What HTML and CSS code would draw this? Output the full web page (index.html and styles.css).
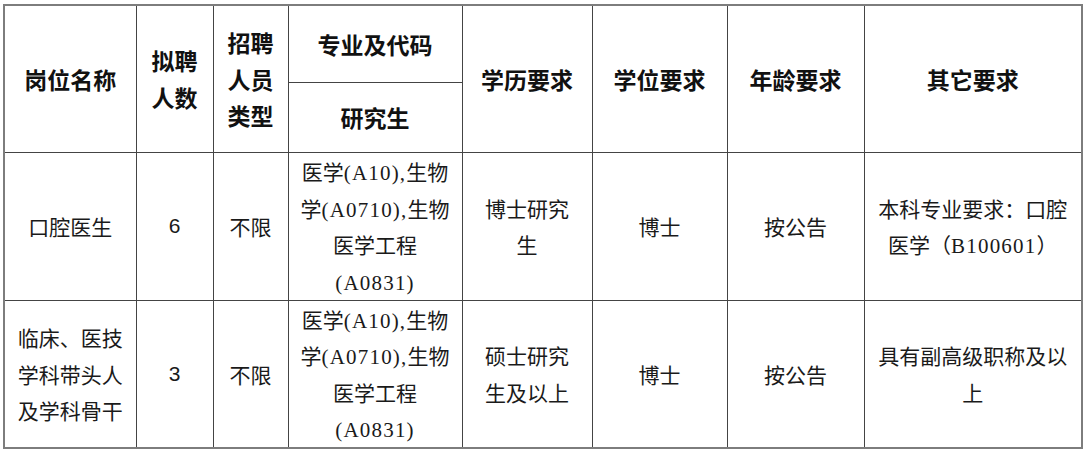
FILE: index.html
```html
<!DOCTYPE html>
<html lang="zh-CN">
<head>
<meta charset="utf-8">
<title>招聘岗位表</title>
<link rel="stylesheet" href="styles.css">
</head>
<body>
<table class="jobs">
  <colgroup>
    <col class="c1"><col class="c2"><col class="c3"><col class="c4">
    <col class="c5"><col class="c6"><col class="c7"><col class="c8">
  </colgroup>
  <thead>
    <tr class="h1">
      <th rowspan="2">岗位名称</th>
      <th rowspan="2">拟聘<br>人数</th>
      <th rowspan="2">招聘<br>人员<br>类型</th>
      <th>专业及代码</th>
      <th rowspan="2">学历要求</th>
      <th rowspan="2">学位要求</th>
      <th rowspan="2">年龄要求</th>
      <th rowspan="2">其它要求</th>
    </tr>
    <tr class="h2">
      <th>研究生</th>
    </tr>
  </thead>
  <tbody>
    <tr class="row">
      <td>口腔医生</td>
      <td class="num">6</td>
      <td>不限</td>
      <td>医学<span class="lat">(A10),</span>生物<br>学<span class="lat">(A0710),</span>生物<br>医学工程<br><span class="lat">(A0831)</span></td>
      <td>博士研究<br>生</td>
      <td>博士</td>
      <td>按公告</td>
      <td>本科专业要求：口腔<br>医学（<span class="lat">B100601</span>）</td>
    </tr>
    <tr class="row">
      <td>临床、医技<br>学科带头人<br>及学科骨干</td>
      <td class="num">3</td>
      <td>不限</td>
      <td>医学<span class="lat">(A10),</span>生物<br>学<span class="lat">(A0710),</span>生物<br>医学工程<br><span class="lat">(A0831)</span></td>
      <td>硕士研究<br>生及以上</td>
      <td>博士</td>
      <td>按公告</td>
      <td>具有副高级职称及以<br>上</td>
    </tr>
  </tbody>
</table>
</body>
</html>
```

FILE: styles.css
```css
html, body {
  margin: 0;
  padding: 0;
  background: #ffffff;
}

body {
  padding: 4px 0 0 3px;
  font-family: "Noto Sans CJK SC", "Noto Sans CJK TC", sans-serif;
  color: #1a1a1a;
}

.jobs {
  border-collapse: collapse;
  table-layout: fixed;
  width: 1078px;
  border: 2px solid #7d7d7d;
}

.c1 { width: 132px; }
.c2 { width: 77px; }
.c3 { width: 75px; }
.c4 { width: 174px; }
.c5 { width: 130px; }
.c6 { width: 135px; }
.c7 { width: 137px; }
.c8 { width: 218px; }

.jobs th,
.jobs td {
  border: 1px solid #444444;
  padding: 0;
  text-align: center;
  vertical-align: middle;
  line-height: 36.5px;
}

.jobs th {
  font-size: 23px;
  font-weight: 700;
  color: #111111;
}

.jobs td {
  font-size: 21px;
  font-weight: 400;
}

.h1 { height: 77px; }
.h2 { height: 70px; }
.row { height: 148px; }

.lat {
  font-family: "Liberation Serif", serif;
  letter-spacing: 1.2px;
  line-height: 1;
}

.num {
  font-family: "Liberation Sans", sans-serif;
}
```
